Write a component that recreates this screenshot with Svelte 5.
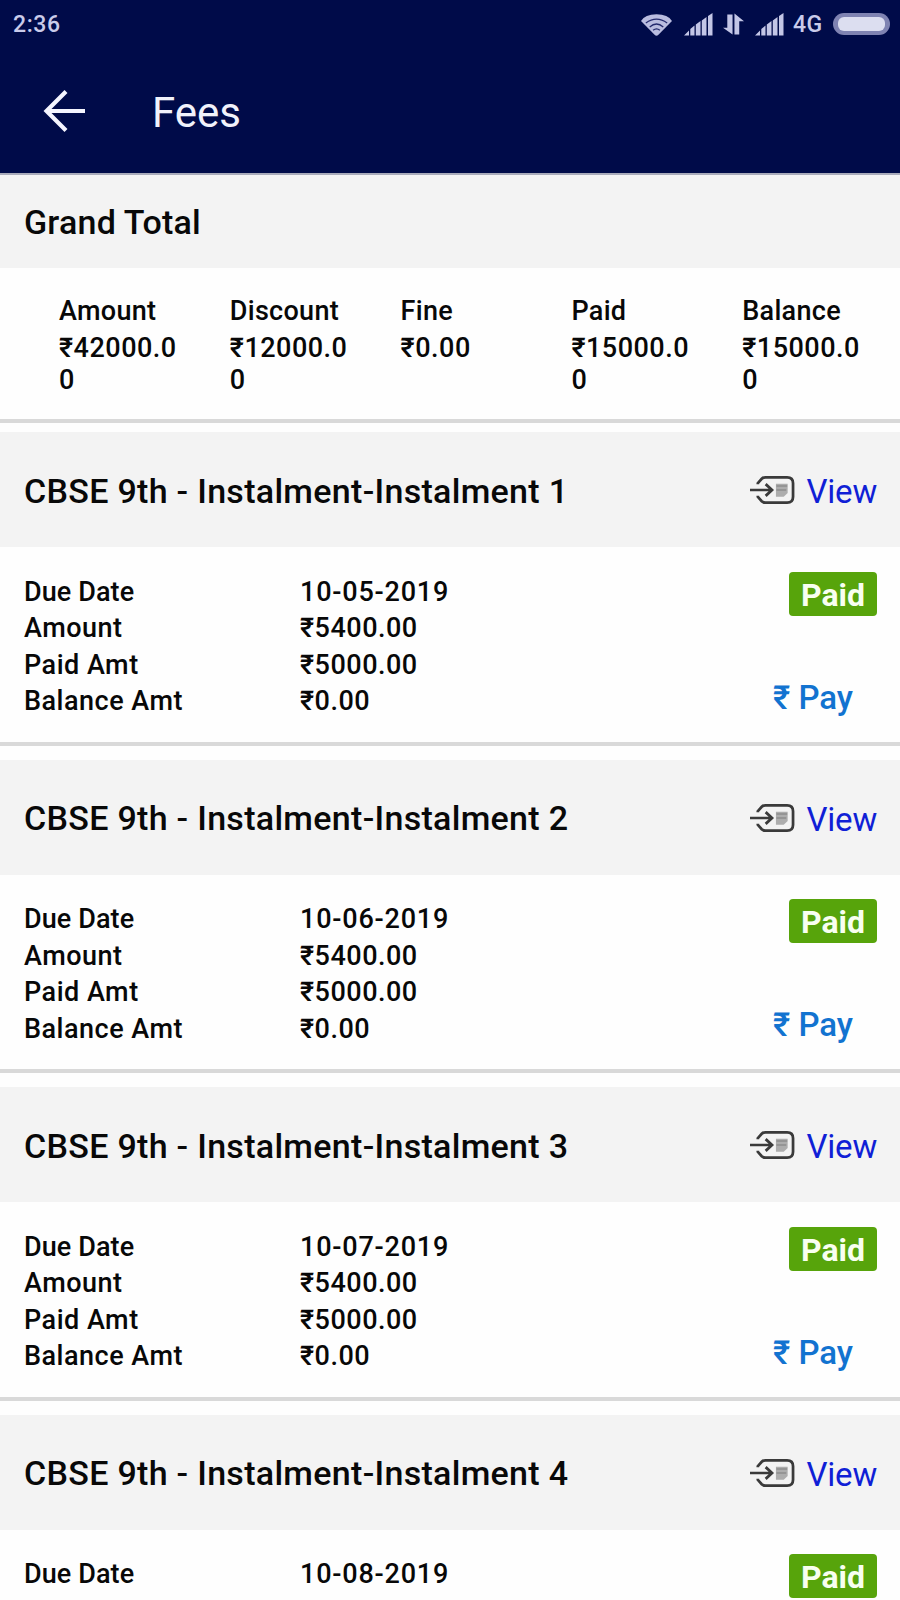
<script>
  const totals = [
    { label: 'Amount', value: '₹42000.00' },
    { label: 'Discount', value: '₹12000.00' },
    { label: 'Fine', value: '₹0.00' },
    { label: 'Paid', value: '₹15000.00' },
    { label: 'Balance', value: '₹15000.00' }
  ];
  const instalments = [
    { n: 1, due: '10-05-2019' },
    { n: 2, due: '10-06-2019' },
    { n: 3, due: '10-07-2019' },
    { n: 4, due: '10-08-2019' }
  ];
</script>

{#snippet signal()}
  <svg class="signal" width="30" height="23" viewBox="0 0 30 23" fill="#c3c6e6">
    <path d="M0 22.500L5 17.500V22.500zM6.300 22.500V16L10.500 12.500V22.500zM11.800 22.500V11.500L16.500 8V22.500zM17.800 22.500V7.500L22.500 4V22.500zM24 22.500V3L28.500 0V22.500z" />
  </svg>
{/snippet}

<div class="app">
  <header>
    <div class="status">
      <span class="time">2:36</span>
      <svg class="wifi" width="31" height="23" viewBox="0 0 32 23">
        <path d="M0 8Q4 1 16 1T32 8L18 22Q16 24 14 22Z" fill="#b9bcdf" />
        <path d="M5 10Q16 2 27 10M9 14Q16 8 23 14M12.500 17.500Q16 14.500 19.500 17.500" fill="none" stroke="#23296c" stroke-width="1.300" />
      </svg>
      {@render signal()}
      <svg class="updown" width="21" height="23" viewBox="0 0 22 23" fill="#c3c6e6">
        <path d="M4.500 1H10V22L0 15H4.500Z" /><path d="M12 22H17V8H22L12 0Z" />
      </svg>
      {@render signal()}
      <span class="net">4G</span>
      <span class="battery"><i></i></span>
    </div>
    <div class="bar">
      <svg width="44" height="44" viewBox="0 0 44 44" fill="none" stroke="#f4f5ff" stroke-width="4.200">
        <path d="M42 22H4M23 2.500L3.500 22L23 41.500" />
      </svg>
      <h1>Fees</h1>
    </div>
  </header>

  <section class="grand">
    <h2>Grand Total</h2>
    <div class="totals">
      {#each totals as t}
        <div class="total"><span class="label">{t.label}</span><span>{t.value}</span></div>
      {/each}
    </div>
  </section>

  {#each instalments as item}
    <section class="card">
      <div class="head">
        <h3>CBSE 9th - Instalment-Instalment {item.n}</h3>
        <a class="view" href="#view">
          <svg width="45" height="30" viewBox="0 0 46 30" fill="none" stroke="#3a3a3a" stroke-width="2.800">
            <path d="M8 9V8L12 3.500Q13.500 2 16 2H38Q44 2 44 8V22Q44 28 38 28H16Q13.500 28 12 26.500L8 22V21" />
            <path d="M0 15H21M16 9L22.500 15L16 21" />
            <path d="M26.500 8.500H38.500V18L34.500 22H26.500Z" fill="#adadad" stroke="none" />
            <path d="M27 11H38M27 15H37" stroke="#8d8d8d" stroke-width="1.500" />
          </svg>
          <span>View</span>
        </a>
      </div>
      <div class="body">
        <dl>
          <dt class="due">Due Date</dt><dd class="date">{item.due}</dd>
          <dt>Amount</dt><dd>₹5400.00</dd>
          <dt>Paid Amt</dt><dd>₹5000.00</dd>
          <dt>Balance Amt</dt><dd>₹0.00</dd>
        </dl>
        <div class="actions">
          <span class="badge">Paid</span>
          <span class="pay">₹ Pay</span>
        </div>
      </div>
    </section>
  {/each}
</div>

<style>
  :global(body) { margin: 0; background: #fff; }
  .app { width: 900px; height: 1600px; overflow: hidden; background: #fefefe; font-family: Roboto, sans-serif; color: #080808; }
  h1, h2, h3, dl, dd { margin: 0; }
  header { height: 175px; background: #000b49; border-bottom: 2px solid #a9abba; box-sizing: border-box; }
  .status { height: 48px; display: flex; align-items: center; padding: 0 10px 0 13px; color: #c9cbea; font-weight: 500; font-size: 23px; }
  .time { margin-right: auto; letter-spacing: .6px; }
  .wifi { margin-right: 12px; }
  .signal { margin-right: 9px; }
  .updown { margin-right: 11px; }
  .net { margin-left: -1px; width: 30px; margin-right: 10px; letter-spacing: .5px; }
  .battery { box-sizing: border-box; width: 57px; height: 22px; border-radius: 11px; background: #7f83b2; padding: 4px 5px; }
  .battery i { display: block; height: 14px; border-radius: 6px; background: #dcdef0; }
  .bar { display: flex; align-items: center; padding-left: 43px; height: 125px; }
  .bar h1 { margin-left: 65px; font-weight: 400; font-size: 42px; color: #f1f2fb; line-height: 48px; padding-top: 4px; }
  h2 { height: 93px; line-height: 95px; padding-left: 24px; background: #f3f3f3; font-weight: 500; font-size: 34px; letter-spacing: .2px; }
  .totals { box-sizing: border-box; height: 151px; padding: 27px 0 0 59px; display: grid; grid-template-columns: repeat(5, 170.800px); }
  .total { display: flex; flex-direction: column; width: 125px; font-weight: 500; font-size: 27px; letter-spacing: .5px; line-height: 32.600px; gap: 4px; word-break: break-all; }
  .label { letter-spacing: .3px; }
  .grand, .card { border-bottom: 4px solid #d9d9d9; }
  .card { margin-bottom: 14px; }
  .grand { margin-bottom: 9px; }
  .head { height: 115px; background: #f3f3f3; display: flex; justify-content: space-between; align-items: center; padding: 0 23px 0 24px; }
  h3 { font-weight: 500; font-size: 34px; letter-spacing: .3px; padding-top: 2.500px; }
  .view { display: flex; align-items: center; gap: 11px; color: #101fd6; font-size: 33px; text-decoration: none; padding-top: 1px; }
  .view span { padding-top: 3px; letter-spacing: -.2px; }
  .body { box-sizing: border-box; height: 194.500px; display: flex; justify-content: space-between; padding: 24.500px 23px 0 24px; }
  dl { display: grid; grid-template-columns: 276px auto; grid-auto-rows: 36.600px; align-content: start; font-weight: 500; font-size: 27px; letter-spacing: .5px; line-height: 40px; }
  .due { letter-spacing: .1px; }
  .date { letter-spacing: .8px; }
  .actions { display: flex; flex-direction: column; align-items: flex-end; }
  .badge { width: 88px; height: 44px; border-radius: 4px; background: #57a40b; color: #f8fff0; font-weight: 700; font-size: 32px; line-height: 46px; text-align: center; }
  .pay { margin: 62px 24px 0 0; color: #1273d0; font-weight: 500; font-size: 33px; line-height: 40px; }
</style>
